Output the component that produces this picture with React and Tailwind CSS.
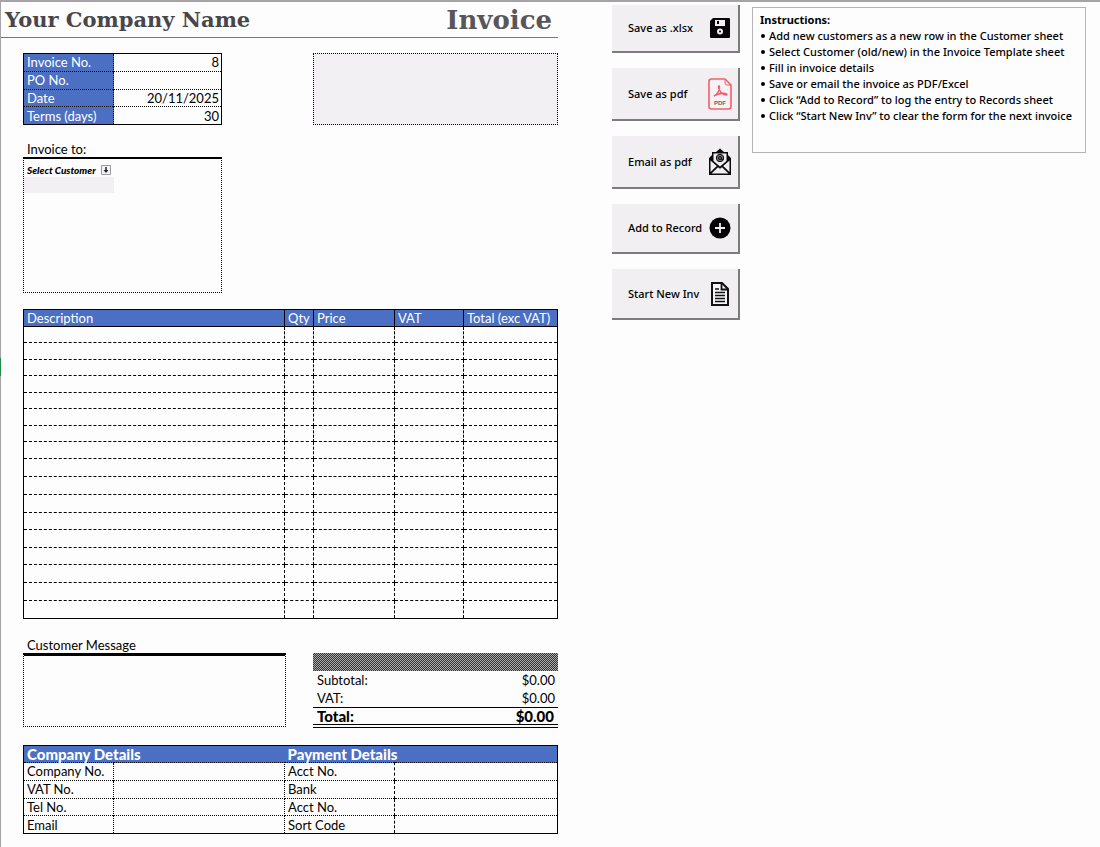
import React from "react";

const SHEET_FONT = "font-['Lato','Liberation_Sans',sans-serif]";
const UI_FONT = "font-['Noto_Sans','Open_Sans',sans-serif]";

const meta = [
  ["Invoice No.", "8"],
  ["PO No.", ""],
  ["Date", "20/11/2025"],
  ["Terms (days)", "30"],
];

const details = [
  ["Company No.", "Acct No."],
  ["VAT No.", "Bank"],
  ["Tel No.", "Acct No."],
  ["Email", "Sort Code"],
];

const instructions = [
  "Add new customers as a new row in the Customer sheet",
  "Select Customer (old/new) in the Invoice Template sheet",
  "Fill in invoice details",
  "Save or email the invoice as PDF/Excel",
  "Click “Add to Record” to log the entry to Records sheet",
  "Click “Start New Inv” to clear the form for the next invoice",
];

const rowHeights = [
  "h-[16px]", "h-[17px]", "h-[16px]", "h-[17px]", "h-[16px]", "h-[17px]",
  "h-[16px]", "h-[17px]", "h-[18px]", "h-[18px]", "h-[18px]", "h-[17px]",
  "h-[18px]", "h-[17px]", "h-[18px]", "h-[18px]", "h-[18px]",
];

function DiskIcon() {
  return (
    <svg width="20" height="20" viewBox="0 0 20 20" aria-hidden="true">
      <path d="M3 0H19Q20 0 20 1V19Q20 20 19 20H1Q0 20 0 19V3Z" fill="#050505" />
      <path d="M5 2H15V8H5Z" fill="#f1eff2" />
      <path d="M7 3H9V6H7Z" fill="#050505" />
      <circle cx="10" cy="13.5" r="3" fill="#f1eff2" />
      <circle cx="10" cy="13.5" r="1" fill="#050505" />
    </svg>
  );
}

function PdfIcon() {
  return (
    <svg width="24" height="32" viewBox="0 0 24 32" aria-hidden="true">
      <path d="M3.5 1H17L23 7V28.5Q23 31 20.500 31H3.500Q1 31 1 28.500V3.500Q1 1 3.500 1Z" fill="#f8f2f4" stroke="#f0606c" strokeWidth="1.600" />
      <path d="M17 1V5Q17 7 19 7H23" fill="none" stroke="#f0606c" strokeWidth="1" />
      <path d="M6 18C9 17 12 12 11.500 8.500C11.200 7 10 8 10.700 10C12 14 15 17 18.500 17C20 16.500 18 15 15 15.200C11 15.500 8 16.500 6 18Z" fill="none" stroke="#f0606c" strokeWidth="1.400" />
      <text x="12" y="26.500" textAnchor="middle" fontSize="6" fontWeight="700" fontFamily="Liberation Sans, sans-serif" fill="#666">PDF</text>
    </svg>
  );
}

function MailIcon() {
  return (
    <svg width="24" height="28" viewBox="0 0 24 28" aria-hidden="true">
      <path d="M1 10L4 7V4H8L12 0.500L16 4H20V7L23 10V27H1Z" fill="#0a0a0a" />
      <path d="M5.500 5.500H18.500V13L12 18.500L5.500 13Z" fill="#f1eff2" />
      <path d="M2.500 12.500L8.800 18L2.500 24Z" fill="#f1eff2" />
      <path d="M21.500 12.500L15.200 18L21.500 24Z" fill="#f1eff2" />
      <path d="M3.500 25.500L10 19.300L12 20.700L14 19.300L20.500 25.500Z" fill="#f1eff2" />
      <circle cx="12" cy="10" r="3.700" fill="#777" stroke="#0a0a0a" strokeWidth="1" />
      <circle cx="12" cy="10" r="1.500" fill="none" stroke="#0a0a0a" strokeWidth="1" />
      <path d="M13.500 9V11.500H15.500" fill="none" stroke="#0a0a0a" strokeWidth="0.800" />
    </svg>
  );
}

function PlusIcon() {
  return (
    <svg width="22" height="22" viewBox="0 0 22 22" aria-hidden="true">
      <circle cx="11" cy="11" r="10.500" fill="#050505" />
      <path d="M11 6V16M6 11H16" stroke="#f1eff2" strokeWidth="1.800" />
    </svg>
  );
}

function PageIcon() {
  return (
    <svg width="18" height="24" viewBox="0 0 18 24" aria-hidden="true">
      <path d="M1 1H11L17 7V23H1Z" fill="#f6f4f7" stroke="#111" strokeWidth="2" />
      <path d="M10.500 1V7.500H17" fill="none" stroke="#111" strokeWidth="1.800" />
      <path d="M4 7H8M4 10.500H14M4 13.500H14M4 16.500H14M4 19.500H14" stroke="#111" strokeWidth="1.400" />
    </svg>
  );
}

const actions = [
  { label: "Save as .xlsx", Icon: DiskIcon, height: "h-[48px]" },
  { label: "Save as pdf", Icon: PdfIcon, height: "h-[53px]" },
  { label: "Email as pdf", Icon: MailIcon, height: "h-[53px]" },
  { label: "Add to Record", Icon: PlusIcon, height: "h-[50px]" },
  { label: "Start New Inv", Icon: PageIcon, height: "h-[51px]" },
];

function MetaTable() {
  return (
    <table className="h-[72px] w-[199px] table-fixed border-collapse border border-black text-[13px] leading-4">
      <colgroup>
        <col className="w-[90px]" />
        <col />
      </colgroup>
      <tbody>
        {meta.map(([label, value]) => (
          <tr key={label} className="border-t border-dotted border-black first:border-solid">
            <th scope="row" className="border-r border-dotted border-black bg-[#4a6fc3] p-0 pl-[3px] text-left font-normal text-white">
              {label}
            </th>
            <td className="p-0 pr-[2px] text-right">{value}</td>
          </tr>
        ))}
      </tbody>
    </table>
  );
}

function ItemsTable() {
  const head = "border border-black bg-[#4a6fc3] p-0 pl-[3px] text-left font-normal text-white whitespace-nowrap";
  const cell = "border border-dashed border-black p-0";
  return (
    <table className="w-full table-fixed border-collapse border border-black text-[13px] leading-[15px]">
      <colgroup>
        <col />
        <col className="w-[29px]" />
        <col className="w-[81px]" />
        <col className="w-[69px]" />
        <col className="w-[94px]" />
      </colgroup>
      <thead>
        <tr className="h-[17px]">
          <th scope="col" className={head}>Description</th>
          <th scope="col" className={head}>Qty</th>
          <th scope="col" className={head}>Price</th>
          <th scope="col" className={head}>VAT</th>
          <th scope="col" className={head}>Total (exc VAT)</th>
        </tr>
      </thead>
      <tbody className="[&>tr:last-child>td]:[border-bottom-style:solid]">
        {rowHeights.map((height, i) => (
          <tr key={i} className={height}>
            <td className={cell + " [border-left-style:solid]"} />
            <td className={cell} />
            <td className={cell} />
            <td className={cell} />
            <td className={cell + " [border-right-style:solid]"} />
          </tr>
        ))}
      </tbody>
    </table>
  );
}

function Totals() {
  return (
    <div className="w-[245px]">
      <div className="h-[18px] bg-[repeating-conic-gradient(#333_0_25%,#aaa_0_50%)] bg-[length:2px_2px]" />
      <dl className="text-[13px] leading-[18px]">
        <div className="flex justify-between pr-[3px] pl-1">
          <dt>Subtotal:</dt>
          <dd>$0.00</dd>
        </div>
        <div className="flex justify-between pr-[3px] pl-1">
          <dt>VAT:</dt>
          <dd>$0.00</dd>
        </div>
        <div className="flex justify-between border-t border-b-4 border-black pr-1 pl-1 text-[15px] leading-4 font-black [border-bottom-style:double]">
          <dt>Total:</dt>
          <dd>$0.00</dd>
        </div>
      </dl>
    </div>
  );
}

function DetailsTable() {
  const label = "border-t border-dotted border-black p-0 pl-[3px] text-left font-normal";
  const blank = "border border-dotted border-black p-0";
  return (
    <table className="h-[89px] w-full table-fixed border-collapse border border-black text-[13px] leading-4">
      <colgroup>
        <col className="w-[90px]" />
        <col />
        <col className="w-[110px]" />
        <col className="w-[163px]" />
      </colgroup>
      <thead>
        <tr className="bg-[#4a6fc3] text-left text-[15px] text-white">
          <th scope="colgroup" colSpan={2} className="p-0 pl-[3px] font-black">Company Details</th>
          <th scope="colgroup" colSpan={2} className="p-0 pl-[3px] font-black">Payment Details</th>
        </tr>
      </thead>
      <tbody>
        {details.map(([company, payment]) => (
          <tr key={company}>
            <th scope="row" className={label}>{company}</th>
            <td className={blank} />
            <th scope="row" className={label}>{payment}</th>
            <td className="border-t border-l border-dotted border-black p-0 [border-left-style:dashed]" />
          </tr>
        ))}
      </tbody>
    </table>
  );
}

export default function App() {
  return (
    <div className="relative flex min-h-screen items-start border-t-2 border-l border-[#a5a3a6] bg-[#fefdfe] text-black">
      <span className="absolute top-[356px] -left-px h-[18px] w-px bg-[#1f8a45]" />
      <main className={"w-full max-w-[557px] shrink-0 " + SHEET_FONT}>
        <header className="flex h-9 items-center justify-between border-b border-[#777] pr-[6px] pl-1 font-['DejaVu_Serif',serif] font-bold text-[#48464a]">
          <h1 className="text-[21px] leading-8">Your Company Name</h1>
          <p className="text-[26px] leading-8 text-[#58565a]">Invoice</p>
        </header>

        <div className="pl-[22px]">
          <section className="flex items-start justify-between pt-[15px]">
            <MetaTable />
            <div className="h-[72px] w-[245px] border border-dotted border-black bg-[#f2f0f3]" />
          </section>

          <section className="w-[199px] pt-4">
            <label htmlFor="customer" className="block pl-1 text-[13px] leading-4">Invoice to:</label>
            <div className="h-[136px] border border-t-2 border-dotted border-black [border-top-style:solid]">
              <div className="flex h-[18px] items-center pt-1 pl-[3px]">
                <select
                  id="customer"
                  className="w-[74px] appearance-none bg-transparent text-[10px] leading-3 font-black italic outline-none"
                >
                  <option>Select Customer</option>
                </select>
                <svg width="10" height="10" viewBox="0 0 10 10" aria-hidden="true">
                  <path d="M0.500 0.500H9.500V9.500H0.500Z" fill="#f4f4f8" stroke="#999" />
                  <path d="M5 2V6" stroke="#223" strokeWidth="1.500" />
                  <path d="M2.500 5H7.500L5 8Z" fill="#223" />
                </svg>
              </div>
              <div className="h-4 w-[90px] bg-[#f2f0f3]" />
            </div>
          </section>

          <section className="pt-4">
            <ItemsTable />
          </section>

          <section className="flex items-start justify-between pt-[18px]">
            <div className="w-[263px]">
              <label htmlFor="message" className="block pl-1 text-[13px] leading-4">Customer Message</label>
              <textarea
                id="message"
                className="block h-[74px] w-full resize-none border border-t-[3px] border-dotted border-black bg-transparent p-1 text-[13px] outline-none [border-top-style:solid]"
              />
            </div>
            <div className="pt-4">
              <Totals />
            </div>
          </section>

          <section className="pt-[17px]">
            <DetailsTable />
          </section>
        </div>
      </main>

      <nav className={"ml-[54px] flex w-[128px] shrink-0 flex-col gap-[15px] pt-[3px] " + UI_FONT} aria-label="Invoice actions">
        {actions.map(({ label, Icon, height }) => (
          <button
            key={label}
            type="button"
            className={
              "flex items-center border-r-2 border-b-2 border-[#7d7b7e] bg-[#f1eff2] pl-4 text-left text-[11px] leading-4 font-medium whitespace-nowrap " +
              height
            }
          >
            <span className="flex-1">{label}</span>
            <span className="flex w-9 justify-center">
              <Icon />
            </span>
          </button>
        ))}
      </nav>

      <aside className={"mt-[5px] mr-[14px] ml-3 h-[146px] min-w-0 flex-1 border border-[#b5b3b6] py-1 pl-[7px] text-[11px] leading-4 font-medium " + UI_FONT}>
        <h2 className="font-bold">Instructions:</h2>
        <ul>
          {instructions.map((line) => (
            <li key={line} className="flex items-center gap-1 pl-px whitespace-nowrap">
              <span className="size-1 rounded-full bg-black" />
              {line}
            </li>
          ))}
        </ul>
      </aside>
    </div>
  );
}
